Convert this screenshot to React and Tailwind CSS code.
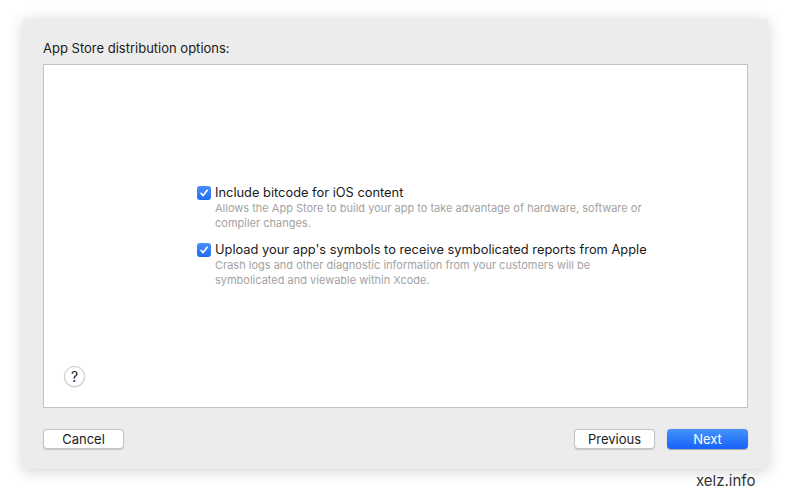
import React from 'react';

const font = { fontFamily: 'Inter, "Liberation Sans", sans-serif' };

function Check() {
    return (
        <span className="mt-px flex h-[14px] w-[14px] shrink-0 items-center justify-center rounded-[3px] bg-gradient-to-b from-[#4a90f8] to-[#1f6cf5]">
            <svg width="10" height="10" viewBox="0 0 10 10" fill="none">
                <path d="M2 5.3 L4.1 7.6 L8.2 2.3" stroke="white" strokeWidth="1.6" strokeLinecap="round" strokeLinejoin="round" />
            </svg>
        </span>
    );
}

function Option({ title, desc }) {
    return (
        <div className="flex gap-[4px]">
            <Check />
            <div>
                <div className="text-[12.85px] leading-[16px] text-[#1a1a1a]">{title}</div>
                <div className="w-[432px] text-[11px] leading-[15px] text-[#a3a3a3]">{desc}</div>
            </div>
        </div>
    );
}

function Button({ children, primary }) {
    return primary ? (
        <button className="h-[20px] w-[81px] rounded-[4px] bg-gradient-to-b from-[#4592f9] to-[#1760fb] text-[13px] leading-[20px] text-white shadow-[0_0.5px_1px_rgba(0,0,0,0.3)]">
            {children}
        </button>
    ) : (
        <button className="h-[20px] w-[81px] rounded-[4px] border border-[#c4c4c4] bg-white text-[13px] leading-[18px] text-[#1a1a1a] shadow-[0_0.5px_1px_rgba(0,0,0,0.15)]">
            {children}
        </button>
    );
}

export default function App() {
    return (
        <div className="relative h-[496px] w-[791px] bg-white pl-[23px] pt-[19px]" style={font}>
            <div className="flex h-[450px] w-[745px] flex-col bg-[#ececec] px-[20px] pt-[21px] shadow-[0_2px_14px_rgba(0,0,0,0.18)]">
                <div className="text-[13px] leading-[16px] text-[#1a1a1a]">App Store distribution options:</div>
                <div className="mt-[8px] flex h-[344px] flex-col border border-[#c3c3c3] bg-white pl-[153px] pt-[120px]">
                    <div className="flex flex-col gap-[11px]">
                        <Option
                            title="Include bitcode for iOS content"
                            desc="Allows the App Store to build your app to take advantage of hardware, software or compiler changes."
                        />
                        <Option
                            title="Upload your app's symbols to receive symbolicated reports from Apple"
                            desc="Crash logs and other diagnostic information from your customers will be symbolicated and viewable within Xcode."
                        />
                    </div>
                    <div className="mt-auto mb-[20px] -ml-[133px] flex h-[21px] w-[21px] items-center justify-center rounded-full border border-[#c8c8c8] bg-white text-[14px] leading-none text-[#222] shadow-[0_0.5px_1px_rgba(0,0,0,0.15)]">
                        ?
                    </div>
                </div>
                <div className="mt-[21px] flex items-center">
                    <Button>Cancel</Button>
                    <div className="ml-auto flex gap-[12px]">
                        <Button>Previous</Button>
                        <Button primary>Next</Button>
                    </div>
                </div>
            </div>
            <div className="absolute left-[696px] top-[471px] text-[15px] leading-[20px] text-[#333]">xelz.info</div>
        </div>
    );
}
